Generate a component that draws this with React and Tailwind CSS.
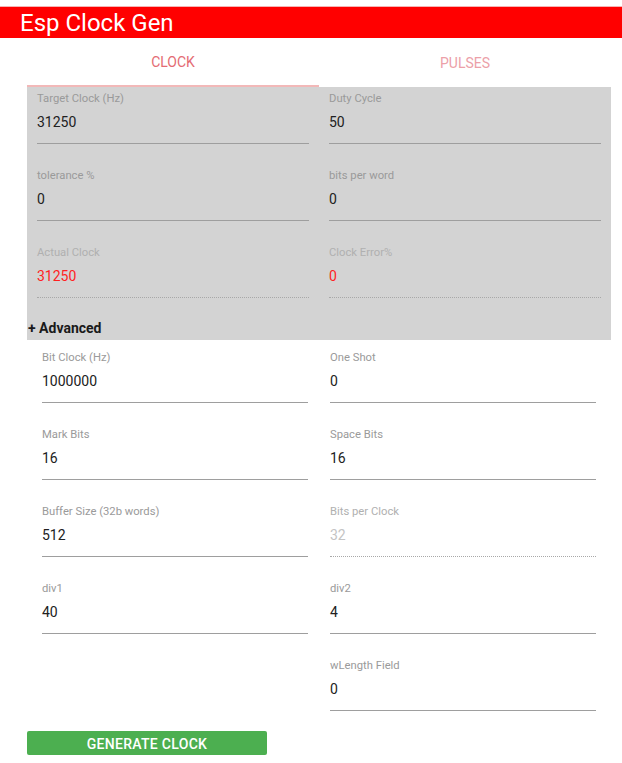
import React from "react";

function Field({ label, value, disabled, error }) {
  const labelColor = disabled ? "text-[#b0b0b0]" : "text-[#9a9a9a]";
  let valueColor = "text-[#212121]";
  if (disabled) valueColor = error ? "text-[#ff1f1f]" : "text-[#c4c4c4]";
  return (
    <div className="pt-[4px] pb-[20px]">
      <div className={`text-[11.25px] leading-4 ${labelColor}`}>{label}</div>
      <div className={`mt-[5px] text-[14px] leading-5 ${valueColor}`}>{value}</div>
      <div
        className={`mt-[11px] border-b ${disabled ? "border-dotted border-[#a8a8a8]" : "border-[#9e9e9e]"}`}
      />
    </div>
  );
}

export default function App() {
  return (
    <div className="min-h-screen bg-white font-['Roboto',sans-serif] pt-[6px]">
      <div className="h-[32px] bg-[#ff0000] border-t border-[#f7b3b3] pl-[20px] flex items-center">
        <h1 className="text-[24px] leading-none text-white">Esp Clock Gen</h1>
      </div>

      <div className="ml-[27px] mr-[11px]">
        <div className="grid grid-cols-2 h-[49px]">
          <div className="flex items-center justify-center pt-[2px] border-b-2 border-[#f2b8b8] text-[14px] text-[#e46b73]">
            CLOCK
          </div>
          <div className="flex items-center justify-center pt-[2px] text-[14px] text-[#eca0a8]">
            PULSES
          </div>
        </div>

        <div className="bg-[#d3d3d3]">
          <div className="grid grid-cols-2">
            <div className="px-[10px]">
              <Field label="Target Clock (Hz)" value="31250" />
              <Field label="tolerance %" value="0" />
              <Field label="Actual Clock" value="31250" disabled error />
            </div>
            <div className="px-[10px]">
              <Field label="Duty Cycle" value="50" />
              <Field label="bits per word" value="0" />
              <Field label="Clock Error%" value="0" disabled error />
            </div>
          </div>
          <div className="h-[22px] pl-[1px] text-[14px] font-bold leading-5 text-[#1a1a1a]">
            + Advanced
          </div>
        </div>

        <div className="px-[4px] pt-[6px] grid grid-cols-2">
          <div className="px-[11px]">
            <Field label="Bit Clock (Hz)" value="1000000" />
            <Field label="Mark Bits" value="16" />
            <Field label="Buffer Size (32b words)" value="512" />
            <Field label="div1" value="40" />
          </div>
          <div className="px-[11px]">
            <Field label="One Shot" value="0" />
            <Field label="Space Bits" value="16" />
            <Field label="Bits per Clock" value="32" disabled />
            <Field label="div2" value="4" />
            <Field label="wLength Field" value="0" />
          </div>
        </div>

        <button className="w-[240px] h-[24px] rounded-[2px] bg-[#4caf50] pt-[1px] text-white text-[14px] font-medium tracking-[0.3px] leading-none">
          GENERATE CLOCK
        </button>
      </div>
    </div>
  );
}
